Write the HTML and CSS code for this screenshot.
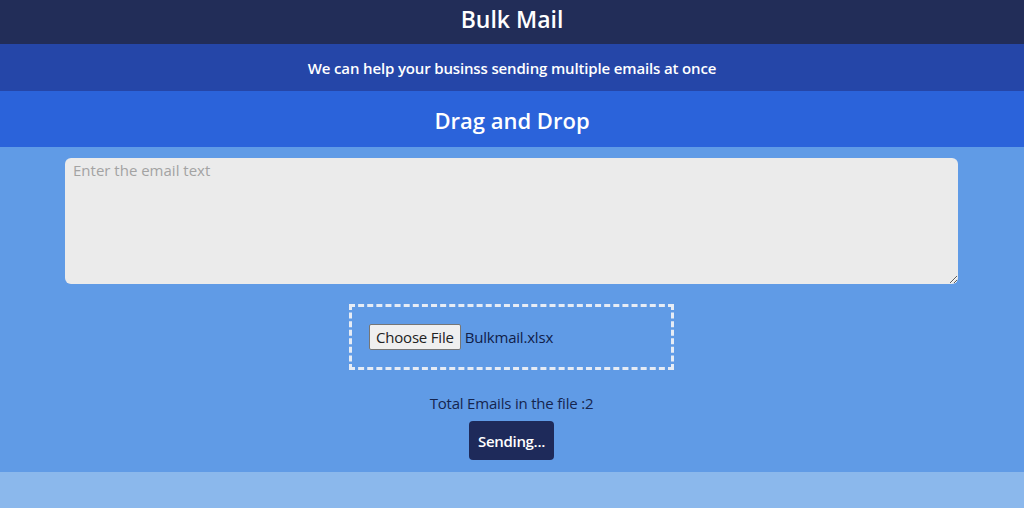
FILE: index.html
```html
<!DOCTYPE html>
<html>
<head>
<meta charset="utf-8">
<link rel="stylesheet" href="styles.css">
</head>
<body>
<div class="header"><h1 class="title">Bulk Mail</h1></div>
<div class="sub"><p class="subtext">We can help your businss sending multiple emails at once</p></div>
<div class="dnd"><h2 class="dndtext">Drag and Drop</h2></div>
<div class="main">
  <textarea class="mail" placeholder="Enter the email text"></textarea>
  <div class="drop">
    <button class="choose" type="button">Choose File</button><span class="fname">Bulkmail.xlsx</span>
  </div>
  <p class="total">Total Emails in the file :2</p>
  <button class="send" type="button">Sending...</button>
</div>
<div class="footer"></div>
</body>
</html>
```
FILE: styles.css
```css
* { box-sizing: border-box; }
html, body { margin: 0; padding: 0; }
body {
  font-family: "Open Sans", "Noto Sans", sans-serif;
  background: #8bb8ec;
  color: #fff;
}
.header {
  background: #222d58;
  height: 44px;
  display: flex;
  align-items: center;
  justify-content: center;
  padding-bottom: 6px;
}
.title {
  margin: 0;
  font-size: 23px;
  font-weight: 600;
  letter-spacing: 0;
}
.sub {
  background: #2546a8;
  height: 47px;
  display: flex;
  align-items: center;
  justify-content: center;
}
.subtext {
  margin: 0;
  font-size: 15px;
  font-weight: 600;
  letter-spacing: -0.15px;
}
.dnd {
  background: #2b63da;
  height: 56px;
  display: flex;
  align-items: center;
  justify-content: center;
  padding-top: 2px;
}
.dndtext {
  margin: 0;
  font-size: 22px;
  font-weight: 600;
  letter-spacing: 0;
}
.main {
  background: #609be6;
  height: 325px;
  padding: 11px 66px 0 65px;
  display: flex;
  flex-direction: column;
  align-items: center;
}
.mail {
  width: 100%;
  height: 126px;
  background: #ebebeb;
  border: none;
  border-radius: 6px;
  padding: 2px 8px;
  font-family: inherit;
  font-size: 15px;
  color: #333;
  resize: vertical;
  outline: none;
}
.mail::placeholder { color: #a3a3a3; }
.drop {
  margin-top: 20px;
  width: 325px;
  height: 66px;
  border: 3px dashed #e6ecf5;
  display: flex;
  align-items: center;
  padding-left: 17px;
}
.choose {
  font-family: inherit;
  font-size: 15px;
  height: 26px;
  padding: 0 6px;
  background: #efefef;
  color: #222;
  border: 1px solid #767676;
  border-radius: 2px;
  letter-spacing: -0.2px;
}
.fname {
  margin-left: 4px;
  font-size: 15px;
  color: #10204a;
  letter-spacing: -0.2px;
}
.total {
  margin: 23px 0 0;
  font-size: 15px;
  color: #15254f;
  letter-spacing: -0.2px;
  line-height: 20px;
}
.send {
  margin-top: 8px;
  width: 85px;
  height: 39px;
  background: #1e2a5a;
  color: #fff;
  border: none;
  border-radius: 4px;
  font-family: inherit;
  font-size: 15px;
  font-weight: 600;
  letter-spacing: -0.3px;
}
.footer { height: 36px; }
```
